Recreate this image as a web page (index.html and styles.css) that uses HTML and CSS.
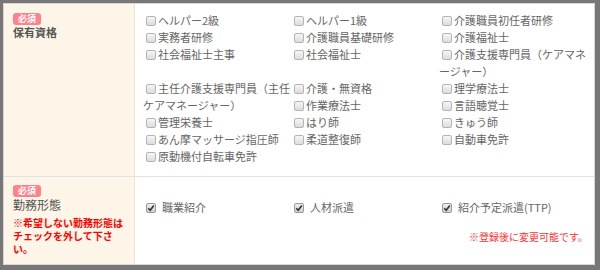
FILE: index.html
```html
<!DOCTYPE html>
<html lang="ja">
<head>
<meta charset="utf-8">
<link rel="stylesheet" href="styles.css">
</head>
<body>
<div class="form">
  <div class="row row-quals">
    <div class="label">
      <span class="badge">必須</span>
      <div class="title bold">保有資格</div>
    </div>
    <div class="field">
      <ul class="grid">
        <li><span class="cb"></span>ヘルパー2級</li>
        <li><span class="cb"></span>ヘルパー1級</li>
        <li><span class="cb"></span>介護職員初任者研修</li>
        <li><span class="cb"></span>実務者研修</li>
        <li><span class="cb"></span>介護職員基礎研修</li>
        <li><span class="cb"></span>介護福祉士</li>
        <li><span class="cb"></span>社会福祉士主事</li>
        <li><span class="cb"></span>社会福祉士</li>
        <li><span class="cb"></span>介護支援専門員（ケアマネージャー）</li>
        <li class="tall"><span class="cb"></span>主任介護支援専門員（主任ケアマネージャー）</li>
        <li><span class="cb"></span>介護・無資格</li>
        <li><span class="cb"></span>理学療法士</li>
        <li><span class="cb"></span>作業療法士</li>
        <li><span class="cb"></span>言語聴覚士</li>
        <li><span class="cb"></span>管理栄養士</li>
        <li><span class="cb"></span>はり師</li>
        <li><span class="cb"></span>きゅう師</li>
        <li><span class="cb"></span>あん摩マッサージ指圧師</li>
        <li><span class="cb"></span>柔道整復師</li>
        <li><span class="cb"></span>自動車免許</li>
        <li><span class="cb"></span>原動機付自転車免許</li>
      </ul>
    </div>
  </div>
  <div class="row row-work">
    <div class="label">
      <span class="badge">必須</span>
      <div class="title">勤務形態</div>
      <p class="warn">※希望しない勤務形態はチェックを外して下さい。</p>
    </div>
    <div class="field field-work">
      <ul class="grid">
        <li><span class="cb checked"><svg viewBox="0 0 10 10" width="10" height="10"><path d="M2.3 5.2 L4.2 7.2 L7.8 2.6" fill="none" stroke="#333" stroke-width="1.6"/></svg></span>職業紹介</li>
        <li><span class="cb checked"><svg viewBox="0 0 10 10" width="10" height="10"><path d="M2.3 5.2 L4.2 7.2 L7.8 2.6" fill="none" stroke="#333" stroke-width="1.6"/></svg></span>人材派遣</li>
        <li><span class="cb checked"><svg viewBox="0 0 10 10" width="10" height="10"><path d="M2.3 5.2 L4.2 7.2 L7.8 2.6" fill="none" stroke="#333" stroke-width="1.6"/></svg></span>紹介予定派遣(TTP)</li>
      </ul>
      <p class="note">※登録後に変更可能です。</p>
    </div>
  </div>
</div>
</body>
</html>
```
FILE: styles.css
```css
html, body {
  margin: 0;
  padding: 0;
}
body {
  background: #777;
  width: 600px;
  height: 270px;
  overflow: hidden;
  font-family: "Noto Sans CJK JP", "Liberation Sans", sans-serif;
  line-break: loose;
}
.form {
  margin: 3px 0 0 3px;
  width: 592px;
  height: 262px;
  box-sizing: border-box;
  border: 1px solid #d6d6d6;
  background: #fff;
  display: flex;
  flex-direction: column;
}
.row {
  display: grid;
  grid-template-columns: 131px 1fr;
}
.row-quals {
  border-bottom: 1px solid #e2e2e2;
}
.row-work {
  flex: 1;
}
.label {
  background: #fdf6e8;
  border-right: 1px solid #ece4d4;
  padding: 9px 9px 0 9px;
}
.row-work .label {
  padding-top: 8px;
}
.badge {
  display: block;
  width: 28px;
  height: 12px;
  line-height: 12px;
  border-radius: 3px;
  background: #ff818d;
  color: #fff;
  font-size: 9px;
  font-weight: bold;
  text-align: center;
}
.title {
  font-size: 11px;
  line-height: 14px;
  color: #555;
}
.bold {
  font-weight: bold;
}
.row-work .title {
  margin-top: 1px;
  font-size: 12px;
  line-height: 13px;
  color: #555;
}
.warn {
  margin: 5px 0 0;
  color: #f00;
  font-size: 10px;
  line-height: 13px;
  font-weight: bold;
}
.field {
  padding: 8px 6px 11px 8px;
}
.field-work {
  padding-top: 22px;
}
.grid {
  list-style: none;
  margin: 0;
  padding: 0;
  display: grid;
  grid-template-columns: repeat(3, 148px);
  font-size: 11px;
  line-height: 17px;
  color: #666;
}
.grid .tall {
  grid-row: span 2;
}
.cb {
  display: inline-block;
  width: 10px;
  height: 10px;
  box-sizing: border-box;
  margin: 0 2px 0 3px;
  border: 1px solid #b4b4b4;
  border-radius: 2px;
  background: linear-gradient(#f6f6f6, #dcdcdc);
  vertical-align: -1px;
  position: relative;
}
.cb.checked {
  margin-right: 6px;
  background: linear-gradient(#eee, #cfcfcf);
  border-color: #999;
}
.cb svg {
  position: absolute;
  left: -1px;
  top: -1px;
}
.note {
  margin: 14px 0 0;
  text-align: right;
  color: #f33;
  font-size: 10px;
  line-height: 14px;
}
```
